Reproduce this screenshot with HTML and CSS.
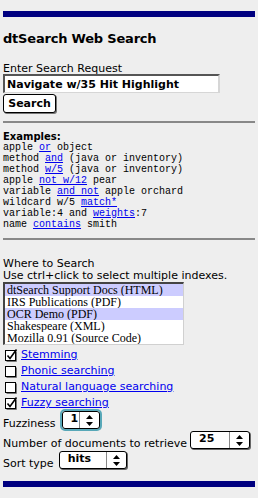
FILE: index.html
```html
<!DOCTYPE html>
<html>
<head>
<meta charset="utf-8">
<title>dtSearch Web Search</title>
<link rel="stylesheet" href="styles.css">
</head>
<body>
<div class="page">
  <div class="bar"></div>
  <h1 class="title">dtSearch Web Search</h1>
  <div class="label search-label">Enter Search Request</div>
  <input class="query" type="text" value="Navigate w/35 Hit Highlight">
  <button class="btn" type="button">Search</button>
  <hr class="rule">
  <div class="ex-title">Examples:</div>
  <div class="examples">
    <div class="ex">apple <a href="#">or</a> object</div>
    <div class="ex">method <a href="#">and</a> (java or inventory)</div>
    <div class="ex">method <a href="#">w/5</a> (java or inventory)</div>
    <div class="ex">apple <a href="#">not w/12</a> pear</div>
    <div class="ex">variable <a href="#">and not</a> apple orchard</div>
    <div class="ex">wildcard w/5 <a href="#">match*</a></div>
    <div class="ex">variable:4 and <a href="#">weights</a>:7</div>
    <div class="ex">name <a href="#">contains</a> smith</div>
  </div>
  <hr class="rule rule2">
  <div class="label where">Where to Search</div>
  <div class="label">Use ctrl+click to select multiple indexes.</div>
  <div class="listbox">
    <div class="opt sel">dtSearch Support Docs (HTML)</div>
    <div class="opt">IRS Publications (PDF)</div>
    <div class="opt sel">OCR Demo (PDF)</div>
    <div class="opt">Shakespeare (XML)</div>
    <div class="opt">Mozilla 0.91 (Source Code)</div>
  </div>
  <div class="checks">
    <div class="crow">
      <svg class="cb" width="13" height="13" viewBox="0 0 13 13"><rect x="0.5" y="1.5" width="10" height="10" fill="#fff" stroke="#000"/><path d="M11.5 2.5V12.5H1.5" fill="none" stroke="#777"/><path d="M2.5 6.5L5 9.5L11.5 0.5" fill="none" stroke="#000" stroke-width="1.6"/></svg>
      <a class="clink" href="#">Stemming</a>
    </div>
    <div class="crow">
      <svg class="cb" width="13" height="13" viewBox="0 0 13 13"><rect x="0.5" y="1.5" width="10" height="10" fill="#fff" stroke="#000"/><path d="M11.5 2.5V12.5H1.5" fill="none" stroke="#777"/></svg>
      <a class="clink" href="#">Phonic searching</a>
    </div>
    <div class="crow">
      <svg class="cb" width="13" height="13" viewBox="0 0 13 13"><rect x="0.5" y="1.5" width="10" height="10" fill="#fff" stroke="#000"/><path d="M11.5 2.5V12.5H1.5" fill="none" stroke="#777"/></svg>
      <a class="clink" href="#">Natural language searching</a>
    </div>
    <div class="crow">
      <svg class="cb" width="13" height="13" viewBox="0 0 13 13"><rect x="0.5" y="1.5" width="10" height="10" fill="#fff" stroke="#000"/><path d="M11.5 2.5V12.5H1.5" fill="none" stroke="#777"/><path d="M2.5 6.5L5 9.5L11.5 0.5" fill="none" stroke="#000" stroke-width="1.6"/></svg>
      <a class="clink" href="#">Fuzzy searching</a>
    </div>
  </div>
  <div class="prow first">
    <span class="label plabel">Fuzziness</span>
    <div class="popup w-fuzz focus">
      <span class="pv">1</span>
      <span class="parrows"><svg width="7" height="11" viewBox="0 0 7 11"><path d="M3.5 0L7 4H0Z M0 7H7L3.5 11Z" fill="#000"/></svg></span>
    </div>
  </div>
  <div class="prow">
    <span class="label plabel">Number of documents to retrieve</span>
    <div class="popup w-num">
      <span class="pv">25</span>
      <span class="parrows"><svg width="7" height="11" viewBox="0 0 7 11"><path d="M3.5 0L7 4H0Z M0 7H7L3.5 11Z" fill="#000"/></svg></span>
    </div>
  </div>
  <div class="prow">
    <span class="label plabel">Sort type</span>
    <div class="popup w-sort">
      <span class="pv">hits</span>
      <span class="parrows"><svg width="7" height="11" viewBox="0 0 7 11"><path d="M3.5 0L7 4H0Z M0 7H7L3.5 11Z" fill="#000"/></svg></span>
    </div>
  </div>
  <div class="bar bottom"></div>
</div>
</body>
</html>
```
FILE: styles.css
```css
html, body {
  margin: 0;
  background: #eeeeee;
}
body {
  font-family: "DejaVu Sans", Verdana, sans-serif;
  color: #000;
}
.page {
  padding: 11px 3px 0;
}
.bar {
  height: 6px;
  background: #000080;
}
.bar.bottom {
  margin-top: 11px;
}
.title {
  margin: 14px 0 0;
  font-size: 13px;
  line-height: 16px;
  font-weight: bold;
  letter-spacing: -0.2px;
}
.label {
  font-size: 11px;
  line-height: 12px;
}
.search-label {
  margin-top: 16px;
  line-height: 11px;
}
.query {
  display: block;
  box-sizing: border-box;
  width: 217px;
  height: 19px;
  margin: 0;
  padding: 0 0 0 2px;
  border-style: solid;
  border-width: 2px 2px 1px 2px;
  border-color: #555 #d6d6d6 #d6d6d6 #555;
  background: #fff;
  font-family: "DejaVu Sans", Verdana, sans-serif;
  font-size: 11px;
  font-weight: bold;
  color: #000;
  outline: none;
}
.btn {
  display: block;
  box-sizing: border-box;
  width: 53px;
  height: 19px;
  margin: 1px 0 0;
  padding: 0;
  border: 1px solid #000;
  border-radius: 3px;
  background: #fff;
  box-shadow: 1px 1px 0 #777;
  font-family: "DejaVu Sans", Verdana, sans-serif;
  font-size: 11px;
  line-height: 15px;
  font-weight: bold;
  color: #000;
}
.rule {
  margin: 8px 0 0;
  border: 0;
  height: 2px;
  background: #888;
}
.ex-title {
  margin-top: 8px;
  font-size: 10px;
  line-height: 11px;
  font-weight: bold;
}
.examples {
  font-family: "Liberation Mono", "Courier New", monospace;
  font-size: 10px;
  line-height: 11px;
}
.ex {
  height: 11px;
  white-space: pre;
}
.examples a,
.clink {
  color: #0000ee;
  text-decoration: underline;
}
.where {
  margin-top: 18px;
}
.listbox {
  box-sizing: border-box;
  width: 181px;
  border-style: solid;
  border-width: 2px 1px 1px 2px;
  border-color: #444 #d0d0d0 #d0d0d0 #444;
  background: #fff;
  font-family: "Liberation Serif", "Times New Roman", serif;
  font-size: 12px;
  line-height: 12px;
}
.opt {
  height: 12px;
  padding-left: 2px;
  white-space: nowrap;
  overflow: hidden;
}
.opt.sel {
  background: #ccccff;
}
.checks {
  margin-top: 2px;
}
.crow {
  display: flex;
  align-items: center;
  height: 16px;
  padding-left: 2px;
}
.cb {
  flex: none;
  display: block;
}
.clink {
  margin-left: 3px;
  font-size: 11px;
  line-height: 16px;
}
.prow {
  display: flex;
  align-items: flex-end;
  margin-top: 1px;
}
.prow.first {
  margin-top: 0;
}
.plabel {
  white-space: nowrap;
}
.popup {
  display: flex;
  box-sizing: border-box;
  height: 18px;
  margin: 0 0 1px 5px;
  border: 1px solid #000;
  border-radius: 3px;
  background: #fff;
  box-shadow: 1px 1px 0 #666;
}
.w-fuzz {
  width: 38px;
  margin-left: 6px;
}
.w-num {
  width: 60px;
  margin-left: 3px;
}
.w-sort {
  width: 68px;
}
.focus {
  outline: 2px solid #58a8b8;
}
.pv {
  flex: 1;
  padding-left: 8px;
  font-size: 11px;
  line-height: 14px;
  font-weight: bold;
}
.parrows {
  flex: none;
  width: 19px;
  display: flex;
  align-items: center;
  justify-content: center;
  border-left: 1px solid #888;
}
.parrows svg {
  display: block;
}
```
